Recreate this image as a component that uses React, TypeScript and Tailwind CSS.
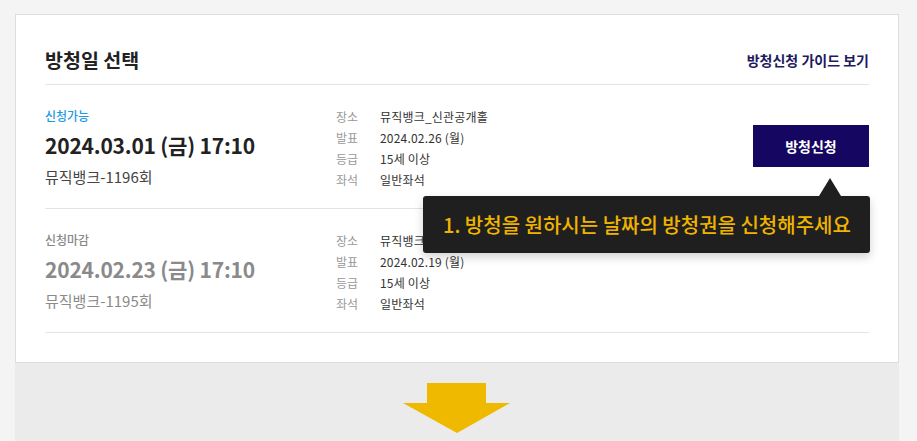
import React from "react";

const font = { fontFamily: '"Noto Sans CJK KR", "Noto Sans", sans-serif' };

type Info = { label: string; value: string };

function Row({
  status,
  statusClass,
  date,
  dateClass,
  sub,
  subClass,
  info,
  button,
}: {
  status: string;
  statusClass: string;
  date: string;
  dateClass: string;
  sub: string;
  subClass: string;
  info: Info[];
  button?: boolean;
}) {
  return (
    <div className="flex items-start border-b border-[#e3e3e3] pt-[22px] pb-[18px]">
      <div className="w-[291px] flex flex-col">
        <div className={`text-[12px] leading-[18px] font-medium ${statusClass}`}>{status}</div>
        <div className={`mt-[5px] text-[21px] leading-[30px] font-bold tracking-[-0.2px] ${dateClass}`}>{date}</div>
        <div className={`mt-[6px] text-[15px] leading-[22px] ${subClass}`}>{sub}</div>
      </div>
      <div className="flex-1 -mt-[1px] flex flex-col">
        {info.map((i) => (
          <div key={i.label} className="flex text-[12px] leading-[21px]">
            <span className="w-[44px] text-[#999]">{i.label}</span>
            <span className="text-[#333] tracking-[0.2px]">{i.value}</span>
          </div>
        ))}
      </div>
      {button && (
        <button className="mt-[18px] w-[116px] h-[42px] bg-[#150761] text-white text-[14px] font-bold">
          방청신청
        </button>
      )}
    </div>
  );
}

export default function App() {
  return (
    <div className="w-[917px] h-[441px] bg-[#f4f4f4] overflow-hidden" style={font}>
      <div className="relative ml-[15px] pt-[14px] w-[884px]">
        <div className="bg-white border border-[#dedede] px-[29px] pb-[29px]">
          <div className="flex items-center justify-between h-[70px] border-b border-[#e3e3e3] pt-[20px]">
            <div className="text-[19.5px] font-bold text-[#222]">방청일 선택</div>
            <div className="text-[14px] font-bold text-[#1e1a5e] pt-[1px]">방청신청 가이드 보기</div>
          </div>
          <Row
            status="신청가능"
            statusClass="text-[#1b9be3]"
            date="2024.03.01 (금) 17:10"
            dateClass="text-[#222]"
            sub="뮤직뱅크-1196회"
            subClass="text-[#444]"
            info={[
              { label: "장소", value: "뮤직뱅크_신관공개홀" },
              { label: "발표", value: "2024.02.26 (월)" },
              { label: "등급", value: "15세 이상" },
              { label: "좌석", value: "일반좌석" },
            ]}
            button
          />
          <Row
            status="신청마감"
            statusClass="text-[#888]"
            date="2024.02.23 (금) 17:10"
            dateClass="text-[#8a8a8a]"
            sub="뮤직뱅크-1195회"
            subClass="text-[#8a8a8a]"
            info={[
              { label: "장소", value: "뮤직뱅크_신관공개홀" },
              { label: "발표", value: "2024.02.19 (월)" },
              { label: "등급", value: "15세 이상" },
              { label: "좌석", value: "일반좌석" },
            ]}
          />
        </div>
        <div className="bg-[#ebebeb] h-[100px] flex justify-center pt-[20px]">
          <svg width="108" height="50" viewBox="0 0 108 50">
            <polygon points="24,0 83,0 83,20 107,20 54,50 0,20 24,20" fill="#efb900" />
          </svg>
        </div>
        {/* tooltip */}
        <div className="absolute left-[408px] top-[196px]">
          <div className="relative">
            <div className="absolute left-[396px] -top-[18px] w-0 h-0 border-l-[11px] border-r-[11px] border-b-[18px] border-l-transparent border-r-transparent border-b-[#1f1f1f]" />
            <div className="w-[447px] h-[57px] bg-[#1f1f1f] rounded-[3px] shadow-[0_4px_10px_rgba(0,0,0,0.18)] flex items-center pl-[20px] text-[20px] font-medium text-[#f0b400]">
              1. 방청을 원하시는 날짜의 방청권을 신청해주세요
            </div>
          </div>
        </div>
      </div>
    </div>
  );
}
